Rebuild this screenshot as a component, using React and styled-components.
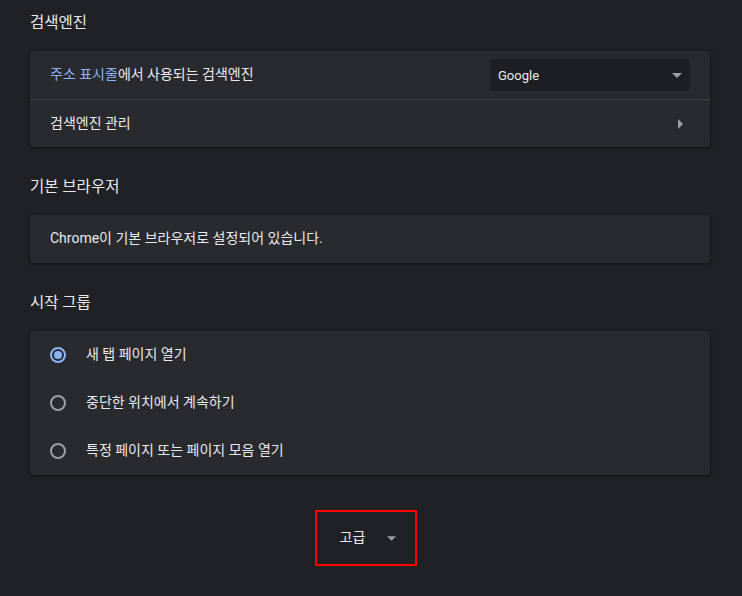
import React, { useState } from 'react';
import styled, { createGlobalStyle } from 'styled-components';

const GlobalStyle = createGlobalStyle`
  html, body {
    margin: 0;
    background: #202124;
  }
  body {
    font-family: Roboto, "Noto Sans CJK KR", sans-serif;
    color: #e8eaed;
    -webkit-font-smoothing: antialiased;
  }
`;

const Page = styled.div`
  width: 742px;
  min-height: 596px;
  box-sizing: border-box;
  padding: 0 32px 0 30px;
  display: flex;
  flex-direction: column;
  gap: 17px;
`;

const Section = styled.section`
  display: flex;
  flex-direction: column;
`;

const SectionTitle = styled.h2`
  margin: 0;
  padding-top: 13px;
  margin-bottom: 18px;
  height: 20px;
  line-height: 20px;
  font-size: 15.5px;
  font-weight: 400;
  color: #e8eaed;
`;

const Card = styled.div`
  background: #292a2d;
  border-radius: 4px;
  box-shadow: 0 1px 2px 0 rgba(0, 0, 0, 0.3), 0 1px 3px 1px rgba(0, 0, 0, 0.15);
  display: flex;
  flex-direction: column;
`;

const Row = styled.div`
  height: 48px;
  box-sizing: border-box;
  display: flex;
  align-items: center;
  padding: 0 ${(p) => (p.$link ? '27px' : '20px')} 0 20px;
  font-size: 14px;
  color: #e8eaed;
  border-top: ${(p) => (p.$divider ? '1px solid #3f4042' : 'none')};
  cursor: ${(p) => (p.$link ? 'pointer' : 'default')};
`;

const Label = styled.span`
  flex: 1;
  line-height: 20px;
  padding-bottom: 2px;
`;

const Accent = styled.span`
  color: #8ab4f8;
`;

const Select = styled.div`
  width: 200px;
  height: 32px;
  box-sizing: border-box;
  background: #1e1f22;
  border-radius: 4px;
  display: flex;
  align-items: center;
  justify-content: space-between;
  padding: 0 8px;
  font-size: 13px;
  color: #e8eaed;
`;

const Triangle = styled.svg`
  display: block;
  fill: #9aa0a6;
  flex-shrink: 0;
`;

const RadioRow = styled.label`
  height: 48px;
  display: flex;
  align-items: center;
  gap: 20px;
  padding: 0 20px;
  font-size: 14px;
  color: #e8eaed;
  cursor: pointer;
`;

const RadioText = styled.span`
  line-height: 20px;
  padding-bottom: 2px;
`;

const RadioCircle = styled.span`
  width: 16px;
  height: 16px;
  box-sizing: border-box;
  border-radius: 50%;
  border: 2px solid ${(p) => (p.$checked ? '#8ab4f8' : '#9aa0a6')};
  display: flex;
  align-items: center;
  justify-content: center;
  flex-shrink: 0;

  &::after {
    content: '';
    width: 8px;
    height: 8px;
    border-radius: 50%;
    background: ${(p) => (p.$checked ? '#8ab4f8' : 'transparent')};
  }
`;

const Footer = styled.div`
  display: flex;
  justify-content: center;
  padding-top: 18px;
  padding-right: 8px;
`;

const AdvancedButton = styled.button`
  width: 102px;
  height: 56px;
  box-sizing: border-box;
  border: 2px solid #ff0000;
  background: transparent;
  display: flex;
  align-items: center;
  justify-content: center;
  gap: 22px;
  padding: 0 0 0 4px;
  font-family: inherit;
  font-size: 14px;
  color: #e8eaed;
  cursor: pointer;
`;

const ButtonText = styled.span`
  line-height: 20px;
  padding-bottom: 2px;
`;

const DownArrow = ({ w = 10, h = 5 }) => (
  <Triangle width={w} height={h} viewBox="0 0 10 5">
    <path d="M0 0h10L5 5z" />
  </Triangle>
);

const RightArrow = () => (
  <Triangle width="5" height="10" viewBox="0 0 5 10">
    <path d="M0 0l5 5-5 5z" />
  </Triangle>
);

const startupOptions = [
  '새 탭 페이지 열기',
  '중단한 위치에서 계속하기',
  '특정 페이지 또는 페이지 모음 열기',
];

const App = () => {
  const [startup, setStartup] = useState(0);

  return (
    <>
      <GlobalStyle />
      <Page>
        <Section>
          <SectionTitle>검색엔진</SectionTitle>
          <Card>
            <Row>
              <Label>
                <Accent>주소 표시줄</Accent>에서 사용되는 검색엔진
              </Label>
              <Select>
                Google
                <DownArrow />
              </Select>
            </Row>
            <Row $divider $link>
              <Label>검색엔진 관리</Label>
              <RightArrow />
            </Row>
          </Card>
        </Section>

        <Section>
          <SectionTitle>기본 브라우저</SectionTitle>
          <Card>
            <Row>
              <Label>Chrome이 기본 브라우저로 설정되어 있습니다.</Label>
            </Row>
          </Card>
        </Section>

        <Section>
          <SectionTitle>시작 그룹</SectionTitle>
          <Card>
            {startupOptions.map((text, i) => (
              <RadioRow key={text} onClick={() => setStartup(i)}>
                <RadioCircle $checked={startup === i} />
                <RadioText>{text}</RadioText>
              </RadioRow>
            ))}
          </Card>
        </Section>

        <Footer>
          <AdvancedButton>
            <ButtonText>고급</ButtonText>
            <DownArrow w={9} h={5} />
          </AdvancedButton>
        </Footer>
      </Page>
    </>
  );
};

export default App;
